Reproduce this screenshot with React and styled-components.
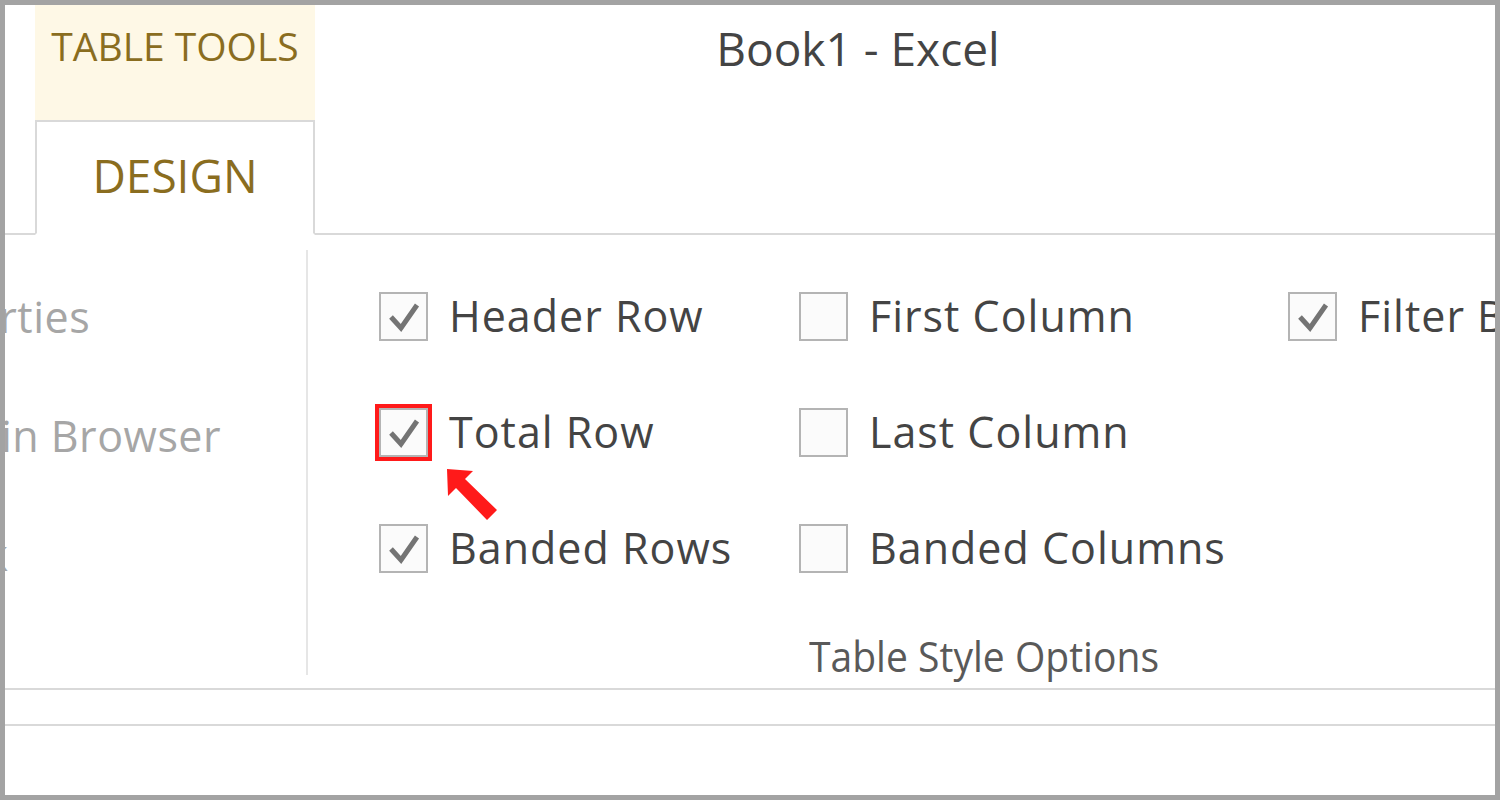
import React from 'react';
import styled, { createGlobalStyle } from 'styled-components';

const GlobalStyle = createGlobalStyle`
  html, body {
    margin: 0;
    padding: 0;
    background: #ffffff;
  }
  * { box-sizing: border-box; }
`;

const Frame = styled.div`
  width: 1500px;
  height: 800px;
  border: 5px solid #a3a3a3;
  background: #ffffff;
  overflow: hidden;
  display: flex;
  flex-direction: column;
  font-family: "Open Sans", "Noto Sans", sans-serif;
`;

const TitleBar = styled.div`
  height: 115px;
  display: flex;
  flex-shrink: 0;
`;

const ContextLabel = styled.div`
  margin-left: 30px;
  width: 280px;
  background: #fef8e6;
  color: #8a6d1f;
  font-size: 39px;
  text-align: center;
  padding-top: 21px;
  line-height: 1;
`;

const WindowTitle = styled.div`
  flex: 1;
  text-align: center;
  padding-right: 94px;
  padding-top: 20px;
  font-size: 46px;
  line-height: 1;
  color: #444444;
`;

const TabRow = styled.div`
  height: 115px;
  flex-shrink: 0;
  display: flex;
  align-items: flex-end;
  padding-left: 30px;
  border-bottom: 2px solid #d9d9d9;
`;

const Tab = styled.div`
  width: 280px;
  height: 115px;
  margin-bottom: -2px;
  border: 2px solid #d9d9d9;
  border-bottom: 2px solid #ffffff;
  background: #ffffff;
  color: #8a6d1f;
  font-size: 46px;
  display: flex;
  justify-content: center;
  padding-top: 30px;
  line-height: 1;
`;

const Ribbon = styled.div`
  height: 455px;
  flex-shrink: 0;
  display: flex;
  padding-top: 15px;
  border-bottom: 2px solid #d9d9d9;
`;

const SideGroup = styled.div`
  width: 303px;
  height: 425px;
  flex-shrink: 0;
  overflow: hidden;
  border-right: 2px solid #e6e6e6;
`;

const SideList = styled.div`
  margin-left: -128px;
  padding-top: 42px;
  display: flex;
  flex-direction: column;
  gap: 70px;
`;

const SideItem = styled.div`
  white-space: nowrap;
  font-size: 43px;
  letter-spacing: 0.5px;
  line-height: 49px;
  color: #a6a6a6;
`;

const OptionsGroup = styled.div`
  flex: 1;
  display: flex;
  flex-direction: column;
  align-items: flex-start;
  padding-left: 71px;
`;

const OptionsGrid = styled.div`
  display: grid;
  grid-template-columns: 420px 489px auto;
  grid-auto-rows: 116px;
  padding-top: 42px;
  white-space: nowrap;
`;

const Option = styled.label`
  position: relative;
  display: flex;
  align-items: flex-start;
  gap: 21px;
  font-size: 43px;
  letter-spacing: 1px;
  line-height: 47px;
  color: #444444;
`;

const Box = styled.span`
  width: 49px;
  height: 49px;
  flex-shrink: 0;
  border: 2px solid #b4b4b4;
  background: #fbfbfb;
  display: flex;
  align-items: center;
  justify-content: center;
  outline: ${({ $highlight }) => ($highlight ? '4px solid #ff1a1a' : 'none')};
`;

const Arrow = styled.svg`
  position: absolute;
  left: 60px;
  top: 54px;
  overflow: visible;
`;

const GroupLabel = styled.div`
  margin-top: -5px;
  margin-left: 430px;
  font-size: 42px;
  line-height: 1;
  color: #595959;
  white-space: nowrap;
  transform: scaleX(0.93);
  transform-origin: left center;
`;

const Strip = styled.div`
  height: 36px;
  flex-shrink: 0;
  border-bottom: 2px solid #d9d9d9;
`;

const Check = () => (
  <svg width="45" height="45" viewBox="0 0 45 45">
    <polyline points="10,23 20,34 36,11" fill="none" stroke="#747474" strokeWidth="5" strokeLinejoin="miter" />
  </svg>
);

const CheckOption = ({ label, checked, highlight, children }) => (
  <Option>
    <Box $highlight={highlight}>{checked && <Check />}</Box>
    {label}
    {children}
  </Option>
);

const options = [
  { label: 'Header Row', checked: true },
  { label: 'First Column', checked: false },
  { label: 'Filter Button', checked: true },
  { label: 'Total Row', checked: true, highlight: true },
  { label: 'Last Column', checked: false },
  null,
  { label: 'Banded Rows', checked: true },
  { label: 'Banded Columns', checked: false },
  null,
];

export default function App() {
  return (
    <>
      <GlobalStyle />
      <Frame>
        <TitleBar>
          <ContextLabel>TABLE TOOLS</ContextLabel>
          <WindowTitle>Book1 - Excel</WindowTitle>
        </TitleBar>
        <TabRow>
          <Tab>DESIGN</Tab>
        </TabRow>
        <Ribbon>
          <SideGroup>
            <SideList>
              <SideItem>Properties</SideItem>
              <SideItem>Open in Browser</SideItem>
              <SideItem>Unlink</SideItem>
            </SideList>
          </SideGroup>
          <OptionsGroup>
            <OptionsGrid>
              {options.map((o, i) =>
                o ? (
                  <CheckOption key={i} label={o.label} checked={o.checked} highlight={o.highlight}>
                    {o.highlight && (
                      <Arrow width="60" height="60" viewBox="0 0 60 60">
                        <polygon points="8,7 34,9 26,17 58,48 48,58 17,26 9,34" fill="#ff1a1a" />
                      </Arrow>
                    )}
                  </CheckOption>
                ) : (
                  <div key={i} />
                )
              )}
            </OptionsGrid>
            <GroupLabel>Table Style Options</GroupLabel>
          </OptionsGroup>
        </Ribbon>
        <Strip />
      </Frame>
    </>
  );
}
